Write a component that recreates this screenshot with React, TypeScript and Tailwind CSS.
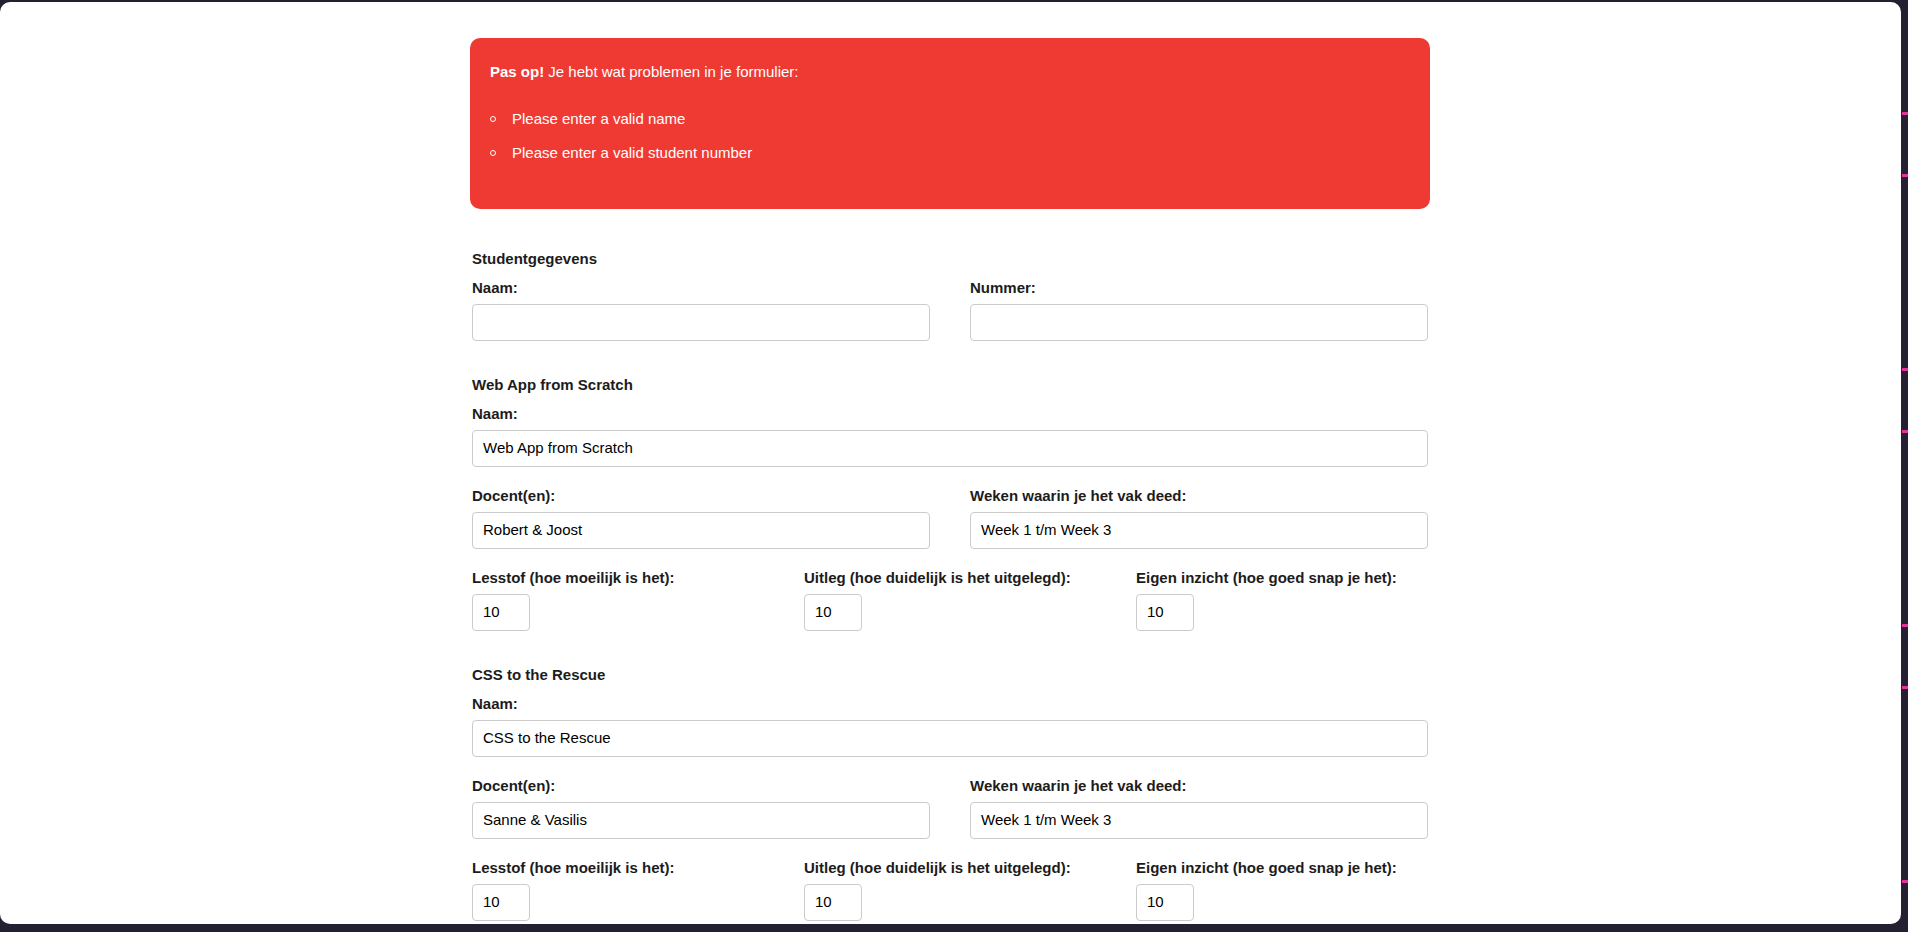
import React from "react";

const font = { fontFamily: '"Liberation Sans", Arial, Helvetica, sans-serif' };

function Label({ children, className = "" }: { children: React.ReactNode; className?: string }) {
  return <div className={`text-[15px] leading-[18px] font-bold text-[#1c1c1c] ${className}`}>{children}</div>;
}

function TextInput({ value = "", className = "" }: { value?: string; className?: string }) {
  return (
    <div
      className={`mt-[7px] h-[37px] rounded-[4px] border border-[#cbcbcb] bg-white px-[10px] flex items-center text-[15px] text-black ${className}`}
    >
      {value}
    </div>
  );
}

function Field({ label, value, first = false, className = "" }: { label: string; value?: string; first?: boolean; className?: string }) {
  return (
    <div className={className}>
      <Label className={first ? "mt-[11px]" : "mt-[20px]"}>{label}</Label>
      <TextInput value={value} />
    </div>
  );
}

function NumberField({ label }: { label: string }) {
  return (
    <div>
      <Label className="mt-[20px]">{label}</Label>
      <TextInput value="10" className="w-[58px]" />
    </div>
  );
}

function Course({ name, teachers, weeks }: { name: string; teachers: string; weeks: string }) {
  return (
    <section className="mt-[35px]">
      <Label>{name}</Label>
      <Field label="Naam:" value={name} first />
      <div className="grid grid-cols-2 gap-x-10">
        <Field label="Docent(en):" value={teachers} />
        <Field label="Weken waarin je het vak deed:" value={weeks} />
      </div>
      <div className="grid grid-cols-3 gap-x-10">
        <NumberField label="Lesstof (hoe moeilijk is het):" />
        <NumberField label="Uitleg (hoe duidelijk is het uitgelegd):" />
        <NumberField label="Eigen inzicht (hoe goed snap je het):" />
      </div>
    </section>
  );
}

const marks = [112, 174, 368, 430, 624, 686, 880];

export default function App() {
  return (
    <div className="h-[932px] w-[1908px] bg-[#241f31] flex pt-[2px] pb-[8px] overflow-hidden" style={font}>
      <div className="w-[1901px] h-[922px] bg-white rounded-[10px] overflow-hidden pr-[1px]">
        <div className="w-[960px] mx-auto pt-[36px]">
          <div className="rounded-[10px] bg-[#ef3a34] text-white px-[20px] pt-[23px] pb-[45px] text-[15px]">
            <p className="leading-[22px]">
              <b>Pas op!</b> Je hebt wat problemen in je formulier:
            </p>
            <ul className="mt-[25px] flex flex-col gap-[12px]">
              <li className="flex items-center leading-[22px]">
                <span className="w-[6px] h-[6px] rounded-full border border-white mr-[16px]" />
                Please enter a valid name
              </li>
              <li className="flex items-center leading-[22px]">
                <span className="w-[6px] h-[6px] rounded-full border border-white mr-[16px]" />
                Please enter a valid student number
              </li>
            </ul>
          </div>

          <form className="px-[2px] mt-[41px]">
            <section>
              <Label>Studentgegevens</Label>
              <div className="grid grid-cols-2 gap-x-10">
                <Field label="Naam:" first />
                <Field label="Nummer:" first />
              </div>
            </section>
            <Course name="Web App from Scratch" teachers="Robert & Joost" weeks="Week 1 t/m Week 3" />
            <Course name="CSS to the Rescue" teachers="Sanne & Vasilis" weeks="Week 1 t/m Week 3" />
          </form>
        </div>
      </div>
      <div className="relative flex-1">
        {marks.map((y) => (
          <div key={y} className="absolute left-[1px] right-0 h-[3px] bg-[#e8309c]" style={{ top: y - 2 }} />
        ))}
      </div>
    </div>
  );
}
